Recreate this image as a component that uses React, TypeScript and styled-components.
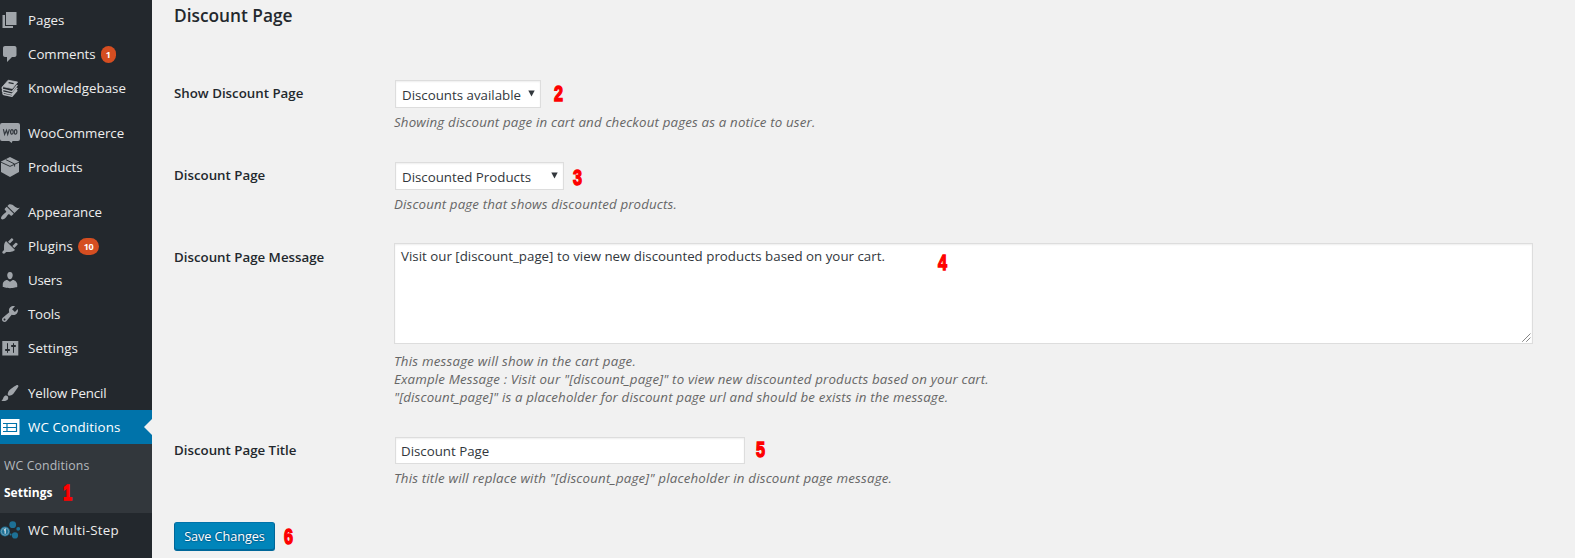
import React from 'react';
import styled, { createGlobalStyle, css } from 'styled-components';

const GlobalStyle = createGlobalStyle`
  * { box-sizing: border-box; }
  body {
    margin: 0;
    background: #f1f1f1;
    color: #23282d;
    font-family: "Open Sans", "Noto Sans", sans-serif;
    font-size: 13.3px;
    overflow: hidden;
  }
`;

const Page = styled.div`
  display: flex;
  height: 558px;
  overflow: hidden;
`;

const Sidebar = styled.nav`
  width: 152px;
  flex: none;
  padding-top: 3px;
  background: #23282d;
`;

const MenuItem = styled.a<{ $active?: boolean; $gap?: boolean; $ls?: number }>`
  position: relative;
  display: flex;
  align-items: center;
  height: 34px;
  margin-top: ${(p) => (p.$gap ? 11 : 0)}px;
  color: ${(p) => (p.$active ? '#fff' : '#eee')};
  background: ${(p) => (p.$active ? '#0073aa' : 'transparent')};
  letter-spacing: ${(p) => p.$ls ?? 0}px;
  white-space: nowrap;
  ${(p) =>
    p.$active &&
    css`
      &::after {
        content: '';
        position: absolute;
        right: 0;
        top: 9px;
        border: 8px solid transparent;
        border-left: 0;
        border-right-color: #f1f1f1;
      }
    `}
`;

const IconSlot = styled.span`
  width: 28px;
  flex: none;
  display: flex;
  svg { display: block; }
`;

const Badge = styled.span<{ $wide?: boolean }>`
  margin-left: 5px;
  width: ${(p) => (p.$wide ? 21 : 15)}px;
  height: 17px;
  border-radius: 9px;
  background: #d54e21;
  color: #fff;
  font-size: 9px;
  font-weight: 700;
  line-height: 17px;
  letter-spacing: -0.4px;
  text-align: center;
`;

const Submenu = styled.div`
  height: 69px;
  padding: 8px 0 0 4px;
  background: #32373c;
`;

const SubItem = styled.a<{ $current?: boolean }>`
  display: flex;
  align-items: center;
  height: 27px;
  font-size: ${(p) => (p.$current ? 12 : 12.3)}px;
  font-weight: ${(p) => (p.$current ? 700 : 400)};
  letter-spacing: ${(p) => (p.$current ? 0 : 0.12)}px;
  color: ${(p) => (p.$current ? '#fff' : '#b4b9be')};
`;

const Step = styled.span<{ $gap?: number; $shift?: number }>`
  display: inline-block;
  width: 10px;
  height: 16px;
  margin: ${(p) => p.$shift ?? 0}px 0 0 ${(p) => p.$gap ?? 0}px;
  color: #fe0000;
  font: 700 21.5px/16px "Liberation Sans", Arial, sans-serif;
  letter-spacing: 0;
  -webkit-text-stroke: 1.4px #fe0000;
  transform: scaleX(0.75);
  transform-origin: 0 50%;
`;

const Main = styled.main`
  flex: 1;
  padding: 0 42px 0 22px;
`;

const Heading = styled.h2`
  margin: 0;
  height: 75px;
  padding-top: 4px;
  font-size: 17.3px;
  font-weight: 600;
  line-height: 24px;
`;

const Row = styled.div<{ $h: number }>`
  display: grid;
  grid-template-columns: 220px 1fr;
  height: ${(p) => p.$h}px;
`;

const Label = styled.label`
  padding-top: 9px;
  font-weight: 600;
  line-height: 18px;
`;

const Line = styled.div`
  display: flex;
  align-items: flex-start;
`;

const field = css`
  border: 1px solid #ddd;
  background: #fff;
  color: #32373c;
  box-shadow: inset 0 1px 2px rgba(0, 0, 0, 0.07);
`;

const Select = styled.div<{ $w: number }>`
  ${field}
  display: flex;
  justify-content: space-between;
  align-items: center;
  width: ${(p) => p.$w}px;
  height: 28px;
  margin: 5px 0 0 1px;
  padding: 2px 5px 0 6px;
  svg { margin-top: -4px; }
`;

const Input = styled.div`
  ${field}
  width: 350px;
  height: 27px;
  margin: 5px 0 0 1px;
  padding: 1px 5px 0;
  line-height: 25px;
`;

const TextArea = styled.div`
  ${field}
  position: relative;
  width: 1139px;
  height: 101px;
  margin-top: 4px;
  padding: 3px 6px;
  line-height: 19px;
  letter-spacing: 0.01px;
`;

const Grip = styled.svg`
  position: absolute;
  right: 1px;
  bottom: 1px;
`;

const Pinned = styled.span`
  position: absolute;
  left: 543px;
  top: 11px;
  display: flex;
`;

const Description = styled.p<{ $ls: number; $top?: number }>`
  margin: ${(p) => p.$top ?? 0}px 0 0;
  color: #666;
  font-style: italic;
  line-height: 18px;
  letter-spacing: ${(p) => p.$ls}px;
  white-space: nowrap;
`;

const SaveButton = styled.button`
  width: 101px;
  height: 29px;
  padding: 0 0 1px;
  border: 1px solid #006799;
  border-top-color: #0073aa;
  border-radius: 3px;
  background: #0085ba;
  box-shadow: inset 0 -1px 0 #006799;
  color: #fff;
  font-family: inherit;
  font-size: 12.7px;
  letter-spacing: -0.06px;
  text-shadow: 0 -1px 1px #006799, 1px 0 1px #006799, 0 1px 1px #006799, -1px 0 1px #006799;
`;

const Dash = ({ d }: { d: string }) => (
  <svg width="20" height="20" viewBox="0 0 20 20" fill="#a0a5aa">
    <path d={d} />
  </svg>
);

const paths = {
  page: 'M6 15V2h10.500v13H6zm-1 1h8v2H2.500V5H5v11z',
  comments: 'M5 2h9.500c1.100 0 2 .9 2 2v7c0 1.100-.9 2-2 2H12l-5 5v-5H5c-1.100 0-2-.9-2-2V4c0-1.100.9-2 2-2z',
  appearance:
    'M14.48 11.06L7.41 3.99l1.5-1.5c.5-.56 2.3-.47 3.51.32 1.21.8 1.43 1.28 2.91 2.1 1.18.64 2.45 1.26 4.45.85zm-.71.71L6.7 4.7 4.93 6.47c-.39.39-.39 1.02 0 1.41l1.06 1.06c.39.39.39 1.03 0 1.42-.6.6-1.43 1.11-2.21 1.69-.35.26-.7.53-1.01.84C1.43 14.23.4 16.08 1.4 17.07c.99 1 2.84-.03 4.18-1.36.31-.31.58-.66.85-1.02.57-.78 1.08-1.61 1.69-2.21.39-.39 1.02-.39 1.41 0l1.06 1.06c.39.39 1.02.39 1.41 0z',
  plugins:
    'M13.11 4.36L9.87 7.6 8 5.73l3.24-3.24c.35-.34 1.05-.2 1.56.32.52.51.66 1.21.31 1.55zm-8 1.77l.91-1.12 9.01 9.01-1.19.84c-.71.71-2.63 1.16-3.82 1.16H6.14L4.9 17.26c-.59.59-1.54.59-2.12 0-.59-.58-.59-1.53 0-2.12l1.24-1.24v-3.88c0-1.13.4-3.19 1.09-3.89zm7.26 3.97l3.24-3.24c.34-.35 1.04-.21 1.55.31.52.51.66 1.21.31 1.55l-3.24 3.25z',
  users:
    'M10 9.25c-2.27 0-2.73-3.44-2.73-3.44C7 4.02 7.82 2 9.97 2c2.16 0 2.98 2.02 2.71 3.81 0 0-.41 3.44-2.68 3.44zm0 2.57L12.72 10c2.39 0 4.52 2.33 4.52 4.53v2.49s-3.65 1.13-7.24 1.13c-3.65 0-7.24-1.13-7.24-1.13v-2.49c0-2.25 1.94-4.48 4.47-4.48z',
  tools:
    'M16.68 9.77c-1.34 1.34-3.3 1.67-4.95.99l-5.41 6.52c-.99.99-2.59.99-3.58 0s-.99-2.59 0-3.57l6.52-5.42c-.68-1.65-.35-3.61.99-4.95 1.28-1.28 3.12-1.62 4.72-1.06l-2.89 2.89 2.82 2.82 2.86-2.87c.53 1.58.18 3.39-1.08 4.65zM3.81 16.21c.4.39 1.04.39 1.43 0 .4-.4.4-1.04 0-1.43-.39-.4-1.03-.4-1.43 0-.39.39-.39 1.03 0 1.43z',
  settings:
    'M18.300 17V3H2.300v14.500h16zM8 11h1c.55 0 1 .45 1 1s-.45 1-1 1H8v1.5c0 .28-.22.5-.5.5s-.5-.22-.5-.5V13H6c-.55 0-1-.45-1-1s.45-1 1-1h1V5.5c0-.28.22-.5.5-.5s.5.22.5.5V11zm5-2h-1c-.55 0-1-.45-1-1s.45-1 1-1h1V5.5c0-.28.22-.5.5-.5s.5.22.5.5V7h1c.55 0 1 .45 1 1s-.45 1-1 1h-1v5.5c0 .28-.22.5-.5.5s-.5-.22-.5-.5V9z',
  brush:
    'M18.33 3.57s.27-.8-.31-1.36c-.53-.52-1.22-.24-1.22-.24-.61.3-5.76 3.47-7.67 5.57-.86.96-2.06 3.79-1.09 4.82.92.98 3.96-.17 4.79-1 2.06-2.06 5.21-7.17 5.5-7.79zM1.4 17.65c2.37-1.56 1.46-3.41 3.23-4.64.93-.65 2.22-.62 3.08.29.63.67.8 2.57-.16 3.46-1.57 1.45-4 1.55-6.15.89z',
};

const BooksIcon = () => (
  <svg width="20" height="20" viewBox="0 0 20 20" fill="none" stroke="#b4b8bc">
    <path d="M2.600 8.600 8.200 2.200 17.600 4 12.400 10.600z" fill="#b4b8bc" strokeWidth=".8" strokeLinejoin="round" />
    <path d="M8.600 4.600 13.600 5.600" stroke="#23282d" strokeWidth="1.400" />
    <path
      d="M2.800 8.800c-.9 1-.6 2.200.3 2.600l9 2.200 5.300-6.700M2.900 11.800c-.8 1-.4 2.100.4 2.400l8.800 2 5.200-6.500M3.300 14.400c-.7.9-.2 1.900.5 2.100l8.200 1.700 5.200-6"
      strokeWidth="1.400"
      strokeLinejoin="round"
    />
  </svg>
);

const WooIcon = () => (
  <svg width="20" height="20" viewBox="0 0 20 20">
    <path d="M2 0h16a2 2 0 0 1 2 2v14a2 2 0 0 1-2 2h-5.500l-.8 2-2.600-2H2a2 2 0 0 1-2-2V2a2 2 0 0 1 2-2z" fill="#a0a5aa" />
    <g fill="none" stroke="#343a40" strokeWidth="1.200">
      <path d="M3.400 6.200 4.600 11.400 6.500 7.200 7.700 11.400 9.400 6.200" />
      <ellipse cx="11.900" cy="8.900" rx="1.300" ry="2.200" />
      <ellipse cx="15.600" cy="8.900" rx="1.300" ry="2.200" />
    </g>
  </svg>
);

const BoxIcon = () => (
  <svg width="20" height="20" viewBox="0 0 20 20">
    <path d="M10 0 19 4.500V15L10 20 1 15V4.500z" fill="#a0a5aa" />
    <path d="M1 5.200 10 9.400 19 5.200M5.800 2.600 14.600 7V9.600" fill="none" stroke="#23282d" strokeWidth=".9" />
  </svg>
);

const ListIcon = () => (
  <svg width="20" height="20" viewBox="0 0 20 20">
    <path d="M1 2h18.500v16H1z" fill="#fff" />
    <path
      d="M3 6.500h14M3 10.500h14M3 14.500h14M7 6v9M16.500 6v9"
      fill="none"
      stroke="#0073aa"
      strokeWidth="1.200"
    />
  </svg>
);

const StepsIcon = () => (
  <svg width="20" height="20" viewBox="0 0 20 20">
    <g fill="#1d7196">
      <circle cx="12.700" cy="4.700" r="3.400" />
      <circle cx="18.200" cy="8.800" r="1.900" />
      <circle cx="15" cy="15.400" r="3.100" />
      <circle cx="10.600" cy="14.500" r="1" />
      <circle cx="5" cy="11.500" r="5" />
    </g>
    <circle cx="5" cy="11.500" r="3.700" fill="none" stroke="#7fa9be" strokeWidth=".8" />
    <path d="M3.900 10.200 5.200 9.300V13.800" fill="none" stroke="#c9dbe4" strokeWidth="1.300" />
  </svg>
);

const Arrow = () => (
  <svg width="7" height="7" viewBox="0 0 7 7">
    <path d="M.3.500h6.400L3.500 6.500z" fill="#32373c" />
  </svg>
);

const menuItems = [
  { label: 'Pages', icon: <Dash d={paths.page} /> },
  { label: 'Comments', icon: <Dash d={paths.comments} />, badge: '1' },
  { label: 'Knowledgebase', icon: <BooksIcon />, ls: 0.03 },
  { label: 'WooCommerce', icon: <WooIcon />, ls: 0.02, gap: true },
  { label: 'Products', icon: <BoxIcon />, ls: -0.1 },
  { label: 'Appearance', icon: <Dash d={paths.appearance} />, ls: -0.04, gap: true },
  { label: 'Plugins', icon: <Dash d={paths.plugins} />, ls: 0.05, badge: '10' },
  { label: 'Users', icon: <Dash d={paths.users} />, ls: -0.25 },
  { label: 'Tools', icon: <Dash d={paths.tools} />, ls: -0.2 },
  { label: 'Settings', icon: <Dash d={paths.settings} />, ls: 0.09 },
  { label: 'Yellow Pencil', icon: <Dash d={paths.brush} />, ls: -0.12, gap: true },
  { label: 'WC Conditions', icon: <ListIcon />, ls: 0.13, active: true },
];

export default function App() {
  return (
    <Page>
      <GlobalStyle />
      <Sidebar>
        {menuItems.map((i) => (
          <MenuItem key={i.label} $active={i.active} $gap={i.gap} $ls={i.ls}>
            <IconSlot>{i.icon}</IconSlot>
            {i.label}
            {i.badge && <Badge $wide={i.badge.length > 1}>{i.badge}</Badge>}
          </MenuItem>
        ))}
        <Submenu>
          <SubItem>WC Conditions</SubItem>
          <SubItem $current>
            Settings
            <Step $gap={11}>1</Step>
          </SubItem>
        </Submenu>
        <MenuItem $ls={0.25}>
          <IconSlot>
            <StepsIcon />
          </IconSlot>
          WC Multi-Step
        </MenuItem>
      </Sidebar>
      <Main>
        <Heading>Discount Page</Heading>
        <Row $h={82}>
          <Label>Show Discount Page</Label>
          <div>
            <Line>
              <Select $w={146}>
                Discounts available
                <Arrow />
              </Select>
              <Step $gap={13} $shift={11}>2</Step>
            </Line>
            <Description $ls={0.165} $top={5}>
              Showing discount page in cart and checkout pages as a notice to user.
            </Description>
          </div>
        </Row>
        <Row $h={82}>
          <Label>Discount Page</Label>
          <div>
            <Line>
              <Select $w={169}>
                Discounted Products
                <Arrow />
              </Select>
              <Step $gap={9} $shift={13}>3</Step>
            </Line>
            <Description $ls={0.135} $top={5}>
              Discount page that shows discounted products.
            </Description>
          </div>
        </Row>
        <Row $h={193}>
          <Label>Discount Page Message</Label>
          <div>
            <TextArea>
              Visit our [discount_page] to view new discounted products based on your cart.
              <Pinned>
                <Step>4</Step>
              </Pinned>
              <Grip width="9" height="9" viewBox="0 0 9 9" stroke="#444" fill="none">
                <path d="M.5 8.500 8.500.5M4.500 8.500 8.500 4.500" strokeDasharray="1.100 .3" />
              </Grip>
            </TextArea>
            <Description $ls={0.22} $top={8}>
              This message will show in the cart page.
            </Description>
            <Description $ls={0.16}>
              Example Message : Visit our "[discount_page]" to view new discounted products based on your cart.
            </Description>
            <Description $ls={0.145}>
              "[discount_page]" is a placeholder for discount page url and should be exists in the message.
            </Description>
          </div>
        </Row>
        <Row $h={90}>
          <Label>Discount Page Title</Label>
          <div>
            <Line>
              <Input>Discount Page</Input>
              <Step $gap={11} $shift={10}>5</Step>
            </Line>
            <Description $ls={0.185} $top={5}>
              This title will replace with "[discount_page]" placeholder in discount page message.
            </Description>
          </div>
        </Row>
        <Line>
          <SaveButton>Save Changes</SaveButton>
          <Step $gap={9} $shift={7}>6</Step>
        </Line>
      </Main>
    </Page>
  );
}
